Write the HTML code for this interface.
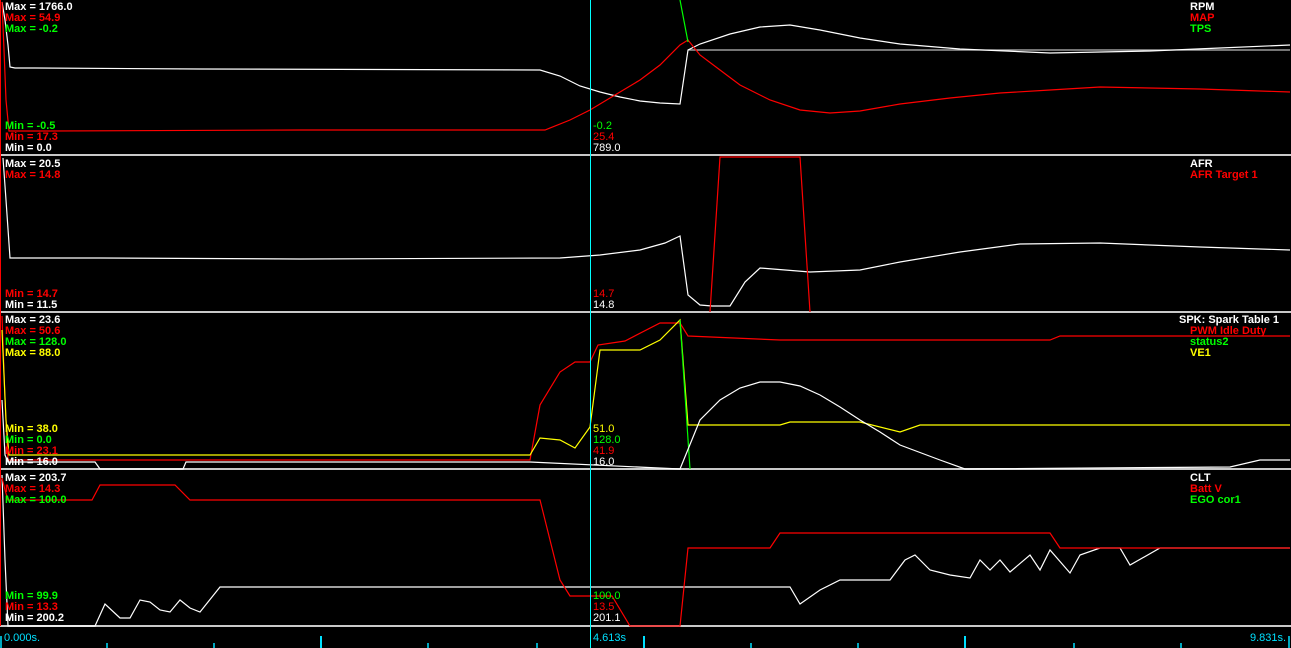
<!DOCTYPE html>
<html><head><meta charset="utf-8"><style>
html,body{margin:0;padding:0;background:#000;width:1291px;height:648px;overflow:hidden}
svg{display:block}
text{font-family:"Liberation Sans",Arial,sans-serif;font-size:11px;font-weight:bold}
.n{font-weight:normal}
</style></head><body>
<svg width="1291" height="648" viewBox="0 0 1291 648">
<rect width="1291" height="648" fill="#000"/>
<g stroke="#c8c8c8" stroke-width="2">
<line x1="0" y1="155" x2="1291" y2="155"/>
<line x1="0" y1="312" x2="1291" y2="312"/>
<line x1="0" y1="469" x2="1291" y2="469"/>
<line x1="0" y1="626" x2="1291" y2="626"/>
</g>
<g fill="none" stroke-width="1.2">
<line x1="688" y1="50" x2="1290" y2="50" stroke="#bbb"/>
<polyline stroke="#fff" points="2,2 5,20 8,45 10,67 15,68 35,68 200,69 540,70 560,76 580,86 600,92 620,97 640,101 660,103 680,104 688,50 700,44 730,34 760,27 790,25 820,30 860,38 900,44 960,49 1050,53 1150,51 1220,48 1290,45"/>
<polyline stroke="#f00" points="2,2 4,50 6,100 9,131 50,131 300,130 545,130 570,120 590,110 615,95 640,80 660,65 680,45 688,40 700,55 720,70 740,85 770,100 800,110 830,113 860,111 900,104 950,98 1000,93 1050,90 1100,87 1200,89 1290,92"/>
<polyline stroke="#0f0" points="680,0 688,42"/>
<polyline stroke="#fff" points="3,158 6,200 10,258 100,258 300,259 560,258 600,255 640,250 665,243 680,236 688,295 700,305 712,306 730,306 745,282 760,268 810,272 860,270 900,262 960,252 1020,244 1100,243 1200,247 1290,250"/>
<polyline stroke="#f00" points="710,312 720,157 800,157 810,312"/>
<polyline stroke="#f00" points="2,316 5,400 8,460 100,460 530,460 540,405 560,372 575,362 590,362 598,345 625,341 660,323 680,323 688,336 780,340 1050,340 1060,336 1290,336"/>
<polyline stroke="#ff0" points="2,330 6,420 9,455 530,455 540,438 560,440 575,448 590,427 600,350 640,350 660,340 680,320 688,425 780,425 790,422 860,422 900,432 920,425 1290,425"/>
<polyline stroke="#0f0" points="680,320 690,469"/>
<polyline stroke="#fff" points="2,400 5,455 8,462 95,462 100,469 183,469 186,462 530,462 680,469 700,420 720,400 740,388 760,382 780,382 800,386 820,395 840,407 860,420 880,432 900,445 940,460 965,469 1230,467 1260,460 1290,460"/>
<polyline stroke="#fff" points="2,475 5,560 8,626 95,626 105,604 120,618 130,618 140,600 150,602 160,610 170,612 180,600 190,608 200,612 220,587 790,587 800,604 820,590 840,580 890,580 905,560 915,555 930,570 950,575 970,578 980,560 990,570 1000,560 1010,572 1030,555 1040,570 1050,550 1070,573 1080,555 1100,548 1120,548 1130,565 1160,548 1290,548"/>
<polyline stroke="#f00" points="2,478 5,490 8,500 92,500 100,485 175,485 190,500 540,500 560,580 570,596 600,596 612,596 630,626 680,626 688,548 770,548 780,533 1050,533 1060,548 1290,548"/>
<line x1="590.5" y1="0" x2="590.5" y2="648" stroke="#00ffff" stroke-width="1"/>
</g>
<line x1="0.5" y1="0" x2="0.5" y2="626" stroke="#f00" stroke-width="1"/>
<g stroke="#00e0ff" stroke-width="1.5">
<line x1="1" y1="636" x2="1" y2="648"/>
<line x1="107" y1="643" x2="107" y2="648"/><line x1="214" y1="643" x2="214" y2="648"/>
<line x1="321" y1="636" x2="321" y2="648" stroke-width="2"/><line x1="428" y1="643" x2="428" y2="648"/>
<line x1="537" y1="643" x2="537" y2="648"/><line x1="644" y1="636" x2="644" y2="648" stroke-width="2"/>
<line x1="751" y1="643" x2="751" y2="648"/><line x1="858" y1="643" x2="858" y2="648"/>
<line x1="965" y1="636" x2="965" y2="648" stroke-width="2"/><line x1="1074" y1="643" x2="1074" y2="648"/>
<line x1="1181" y1="643" x2="1181" y2="648"/><line x1="1289" y1="636" x2="1289" y2="648"/>
</g>
<g>
<text x="5" y="10" fill="#fff">Max = 1766.0</text>
<text x="5" y="21" fill="#f00">Max = 54.9</text>
<text x="5" y="32" fill="#0f0">Max = -0.2</text>
<text x="5" y="129" fill="#0f0">Min = -0.5</text>
<text x="5" y="140" fill="#f00">Min = 17.3</text>
<text x="5" y="151" fill="#fff">Min = 0.0</text>
<text x="1190" y="10" fill="#fff">RPM</text>
<text x="1190" y="21" fill="#f00">MAP</text>
<text x="1190" y="32" fill="#0f0">TPS</text>
<text x="5" y="167" fill="#fff">Max = 20.5</text>
<text x="5" y="178" fill="#f00">Max = 14.8</text>
<text x="5" y="297" fill="#f00">Min = 14.7</text>
<text x="5" y="308" fill="#fff">Min = 11.5</text>
<text x="1190" y="167" fill="#fff">AFR</text>
<text x="1190" y="178" fill="#f00">AFR Target 1</text>
<text x="5" y="323" fill="#fff">Max = 23.6</text>
<text x="5" y="334" fill="#f00">Max = 50.6</text>
<text x="5" y="345" fill="#0f0">Max = 128.0</text>
<text x="5" y="356" fill="#ff0">Max = 88.0</text>
<text x="5" y="432" fill="#ff0">Min = 38.0</text>
<text x="5" y="443" fill="#0f0">Min = 0.0</text>
<text x="5" y="454" fill="#f00">Min = 23.1</text>
<text x="5" y="465" fill="#fff">Min = 16.0</text>
<text x="1179" y="323" fill="#fff">SPK: Spark Table 1</text>
<text x="1190" y="334" fill="#f00">PWM Idle Duty</text>
<text x="1190" y="345" fill="#0f0">status2</text>
<text x="1190" y="356" fill="#ff0">VE1</text>
<text x="5" y="481" fill="#fff">Max = 203.7</text>
<text x="5" y="492" fill="#f00">Max = 14.3</text>
<text x="5" y="503" fill="#0f0">Max = 100.0</text>
<text x="5" y="599" fill="#0f0">Min = 99.9</text>
<text x="5" y="610" fill="#f00">Min = 13.3</text>
<text x="5" y="621" fill="#fff">Min = 200.2</text>
<text x="1190" y="481" fill="#fff">CLT</text>
<text x="1190" y="492" fill="#f00">Batt V</text>
<text x="1190" y="503" fill="#0f0">EGO cor1</text>
</g>
<g>
<text class="n" x="593" y="129" fill="#0f0">-0.2</text>
<text class="n" x="593" y="140" fill="#f00">25.4</text>
<text class="n" x="593" y="151" fill="#fff">789.0</text>
<text class="n" x="593" y="297" fill="#f00">14.7</text>
<text class="n" x="593" y="308" fill="#fff">14.8</text>
<text class="n" x="593" y="432" fill="#ff0">51.0</text>
<text class="n" x="593" y="443" fill="#0f0">128.0</text>
<text class="n" x="593" y="454" fill="#f00">41.9</text>
<text class="n" x="593" y="465" fill="#fff">16.0</text>
<text class="n" x="593" y="599" fill="#0f0">100.0</text>
<text class="n" x="593" y="610" fill="#f00">13.5</text>
<text class="n" x="593" y="621" fill="#fff">201.1</text>
<text class="n" x="4" y="641" fill="#00e0ff">0.000s.</text>
<text class="n" x="593" y="641" fill="#00e0ff">4.613s</text>
<text class="n" x="1250" y="641" fill="#00e0ff">9.831s.</text>
</g>
</svg>
</body></html>
